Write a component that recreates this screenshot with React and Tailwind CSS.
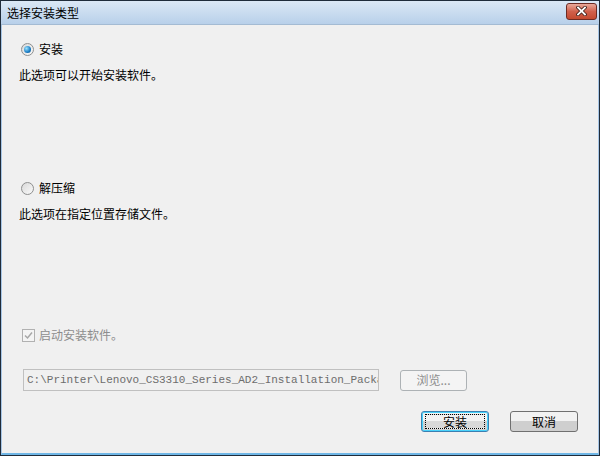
const font = "font-['Microsoft_YaHei','Noto_Sans_CJK_SC','Liberation_Sans',sans-serif]"

// 单选按钮
const Radio = ({ checked, label }) => (
  <div className="flex items-center gap-[5px] h-[16px]">
    <div className="w-[13px] h-[13px] rounded-full border border-[#8e8f8f] bg-gradient-to-br from-[#d9d9d9] to-[#fafafa] flex items-center justify-center">
      {checked && (
        <div className="w-[7px] h-[7px] rounded-full bg-[radial-gradient(circle_at_35%_35%,#9be3ff,#1a7cc4_60%,#0b4f86)]" />
      )}
    </div>
    <span>{label}</span>
  </div>
)

// 按钮
const Button = ({ children, focused, disabled, className = '' }) => (
  <div
    className={`h-[21px] rounded-[3px] border flex items-center justify-center ${
      focused
        ? 'border-[#3c7fb1] shadow-[inset_0_0_0_1px_#48d2fb]'
        : disabled
        ? 'border-[#adb2b5]'
        : 'border-[#707070]'
    } ${disabled ? 'bg-[#f4f4f4] text-[#8d8d8d]' : 'bg-gradient-to-b from-[#f2f2f2] from-50% to-[#cfcfcf] to-50% text-black'} ${className}`}
  >
    {focused ? (
      <div className="border border-dotted border-black h-[15px] w-[calc(100%-6px)] flex items-center justify-center bg-gradient-to-b from-[#f2f2f2] from-50% to-[#d9d9d9] to-50%">
        {children}
      </div>
    ) : (
      children
    )}
  </div>
)

export default function App() {
  return (
    <div className={`w-[600px] h-[456px] flex flex-col bg-[#1f2c3a] p-px text-[12px] text-black ${font}`}>
      {/* 标题栏 */}
      <div className="h-[24px] shrink-0 bg-gradient-to-b from-[#dbe8f5] to-[#b8d0ea] flex items-center justify-between pl-[6px] pr-[2px] border-b border-[#a4bbd3]">
        <span className="text-[12px] text-black">选择安装类型</span>
        <div className="w-[31px] h-[17px] mb-[3px] rounded-[3px] border border-[#6d2b23] bg-gradient-to-b from-[#e9a99b] from-0% via-[#d0604b] via-50% to-[#c44a2f] flex items-center justify-center">
          <svg width="11" height="10" viewBox="0 0 11 10">
            <path d="M2 1.5L9 8.5M9 1.5L2 8.5" stroke="#3a1a14" strokeWidth="3.4" strokeLinecap="square" />
            <path d="M2 1.5L9 8.5M9 1.5L2 8.5" stroke="#ffffff" strokeWidth="1.8" strokeLinecap="square" />
          </svg>
        </div>
      </div>

      {/* 内容 */}
      <div className="flex-1 flex flex-col bg-[#f0f0f0] border-x border-b-2 border-[#6fb6e6] border-x-[#a7c6e6] pl-[17px] pr-[20px]">
        <div className="mt-[16px] pl-[2px]">
          <Radio checked label="安装" />
        </div>
        <div className="mt-[9px]">此选项可以开始安装软件。</div>

        <div className="mt-[96px] pl-[2px]">
          <Radio label="解压缩" />
        </div>
        <div className="mt-[9px]">此选项在指定位置存储文件。</div>

        <div className="mt-[103px] pl-[3px] flex items-center gap-[4px] text-[#8d8d8d]">
          <div className="w-[13px] h-[13px] border border-[#b1b1b1] bg-[#f4f4f4] flex items-center justify-center">
            <svg width="9" height="9" viewBox="0 0 9 9">
              <path d="M1 4.5L3.5 7L8 1.5" stroke="#a7a7a7" strokeWidth="1.5" fill="none" />
            </svg>
          </div>
          <span>启动安装软件。</span>
        </div>

        <div className="mt-[25px] pl-[4px] flex items-center gap-[21px]">
          <div className="w-[356px] h-[22px] border border-[#c0c0c0] bg-[#f0f0f0] overflow-hidden whitespace-nowrap flex items-center pl-[3px] text-[#6d6d6d] font-['Liberation_Mono',monospace] text-[11px]">
            C:\Printer\Lenovo_CS3310_Series_AD2_Installation_Package
          </div>
          <Button disabled className="w-[67px]">浏览...</Button>
        </div>

        <div className="mt-[20px] flex justify-end gap-[21px]">
          <Button focused className="w-[68px]">安装</Button>
          <Button className="w-[68px]">取消</Button>
        </div>
      </div>
    </div>
  )
}
